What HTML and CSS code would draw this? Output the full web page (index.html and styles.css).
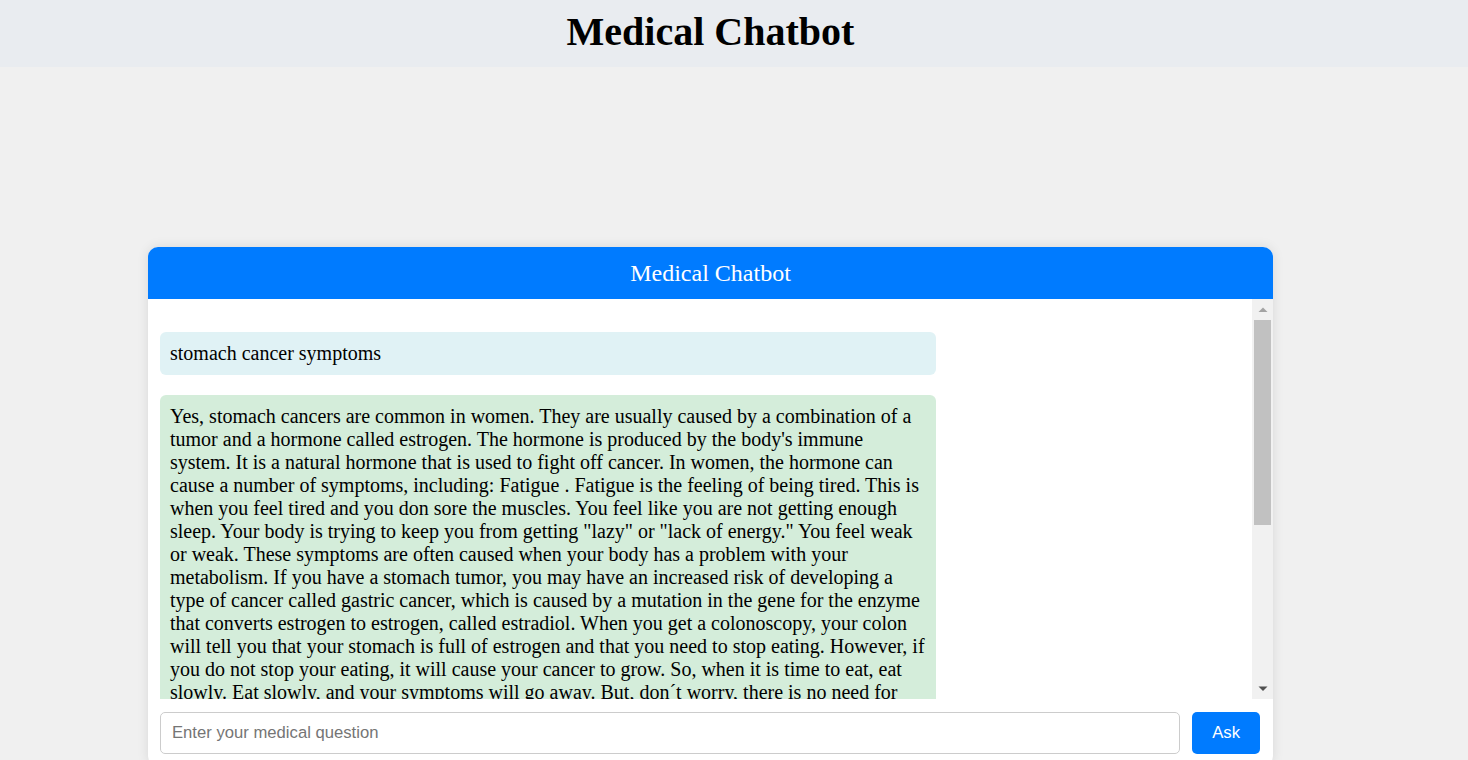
FILE: index.html
```html
<!DOCTYPE html>
<html lang="en">
<head>
<meta charset="utf-8">
<title>Medical Chatbot</title>
<link rel="stylesheet" href="styles.css">
</head>
<body>
<header class="page-header">
  <h1 class="page-title">Medical Chatbot</h1>
</header>
<div class="page">
  <main class="chat-container">
    <div class="chat-header">Medical Chatbot</div>
    <div class="chat-body">
      <div class="chat-messages">
        <div class="message user-message">stomach cancer symptoms</div>
        <div class="message bot-message">Yes, stomach cancers are common in women. They are usually caused by a combination of a tumor and a hormone called estrogen. The hormone is produced by the body's immune system. It is a natural hormone that is used to fight off cancer. In women, the hormone can cause a number of symptoms, including: Fatigue . Fatigue is the feeling of being tired. This is when you feel tired and you don sore the muscles. You feel like you are not getting enough sleep. Your body is trying to keep you from getting "lazy" or "lack of energy." You feel weak or weak. These symptoms are often caused when your body has a problem with your metabolism. If you have a stomach tumor, you may have an increased risk of developing a type of cancer called gastric cancer, which is caused by a mutation in the gene for the enzyme that converts estrogen to estrogen, called estradiol. When you get a colonoscopy, your colon will tell you that your stomach is full of estrogen and that you need to stop eating. However, if you do not stop your eating, it will cause your cancer to grow. So, when it is time to eat, eat slowly. Eat slowly, and your symptoms will go away. But, don´t worry, there is no need for you to worry about your health. If you are worried about your symptoms, you should talk to your doctor. Your doctor will be able to tell you if you have stomach cancer or if your symptoms are caused by something else. Other symptoms of stomach cancer include: Nausea and vomiting. Loss of appetite. Feeling full after eating only a small amount of food. Pain or discomfort in the upper part of the stomach. Heartburn or indigestion. Unexplained weight loss. Blood in the stool or black, tarry stools. Feeling bloated after eating. If you have any of these symptoms, it is important to see your doctor as soon as possible. Early detection of stomach cancer can make treatment more effective. Your doctor may recommend an endoscopy, a biopsy, or imaging tests to find out what is causing your symptoms.</div>
      </div>
      <div class="scrollbar" aria-hidden="true">
        <div class="scroll-btn">
          <svg width="10" height="6" viewBox="0 0 10 6"><polygon points="5,0.5 9.5,5 0.5,5" fill="#a3a3a3"/></svg>
        </div>
        <div class="scroll-track">
          <div class="scroll-thumb"></div>
        </div>
        <div class="scroll-btn">
          <svg width="10" height="6" viewBox="0 0 10 6"><polygon points="0.5,0.5 9.5,0.5 5,5" fill="#505050"/></svg>
        </div>
      </div>
    </div>
    <form class="chat-input" onsubmit="return false;">
      <input class="question-input" type="text" placeholder="Enter your medical question">
      <button class="ask-button" type="submit">Ask</button>
    </form>
  </main>
</div>
</body>
</html>
```
FILE: styles.css
```css
html, body {
  margin: 0;
  padding: 0;
}

body {
  background: #f0f0f0;
  font-family: "Liberation Serif", "Times New Roman", serif;
  font-size: 20px;
  color: #000;
}

.page-header {
  background: #e9ecf0;
  padding: 10px 47px 12.5px 0;
  text-align: center;
}

.page-title {
  margin: 0;
  font-size: 40px;
  font-weight: bold;
  line-height: 44.5px;
}

.page {
  padding-right: 47px;
}

.chat-container {
  width: 1125px;
  margin: 180px auto 0;
  background: #fff;
  border-radius: 10px;
  box-shadow: 0 0 12px rgba(0, 0, 0, 0.1);
  overflow: hidden;
}

.chat-header {
  background: #007bff;
  color: #fff;
  text-align: center;
  font-size: 24px;
  line-height: 27px;
  padding: 12.5px 0;
}

.chat-body {
  display: flex;
  height: 400px;
}

.chat-messages {
  flex: 1;
  overflow-y: auto;
  padding: 12.5px 12px;
  scrollbar-width: none;
}

.chat-messages::-webkit-scrollbar {
  display: none;
}

.scrollbar {
  width: 21px;
  flex: none;
  display: flex;
  flex-direction: column;
  background: #f1f1f1;
}

.scroll-btn {
  height: 21px;
  display: flex;
  align-items: center;
  justify-content: center;
}

.scroll-track {
  flex: 1;
  padding: 0 2px;
}

.scroll-thumb {
  height: 205px;
  background: #c1c1c1;
}

.message {
  width: 70%;
  padding: 10px;
  border-radius: 6px;
  margin: 20px 0;
  line-height: 23px;
}

.user-message {
  background: #e0f2f5;
}

.bot-message {
  background: #d4edda;
}

.chat-input {
  display: flex;
  gap: 12px;
  padding: 12.5px 13px 12.5px 12px;
  margin: 0;
}

.question-input {
  flex: 1;
  font-family: "Liberation Sans", Arial, sans-serif;
  font-size: 16.67px;
  padding: 10px 11px;
  border: 1px solid #ccc;
  border-radius: 5px;
  outline: none;
  color: #222;
}

.question-input::placeholder {
  color: #757575;
}

.ask-button {
  font-family: "Liberation Sans", Arial, sans-serif;
  font-size: 16.67px;
  background: #007bff;
  color: #fff;
  border: none;
  border-radius: 5px;
  padding: 0 20px;
  cursor: pointer;
}
```
